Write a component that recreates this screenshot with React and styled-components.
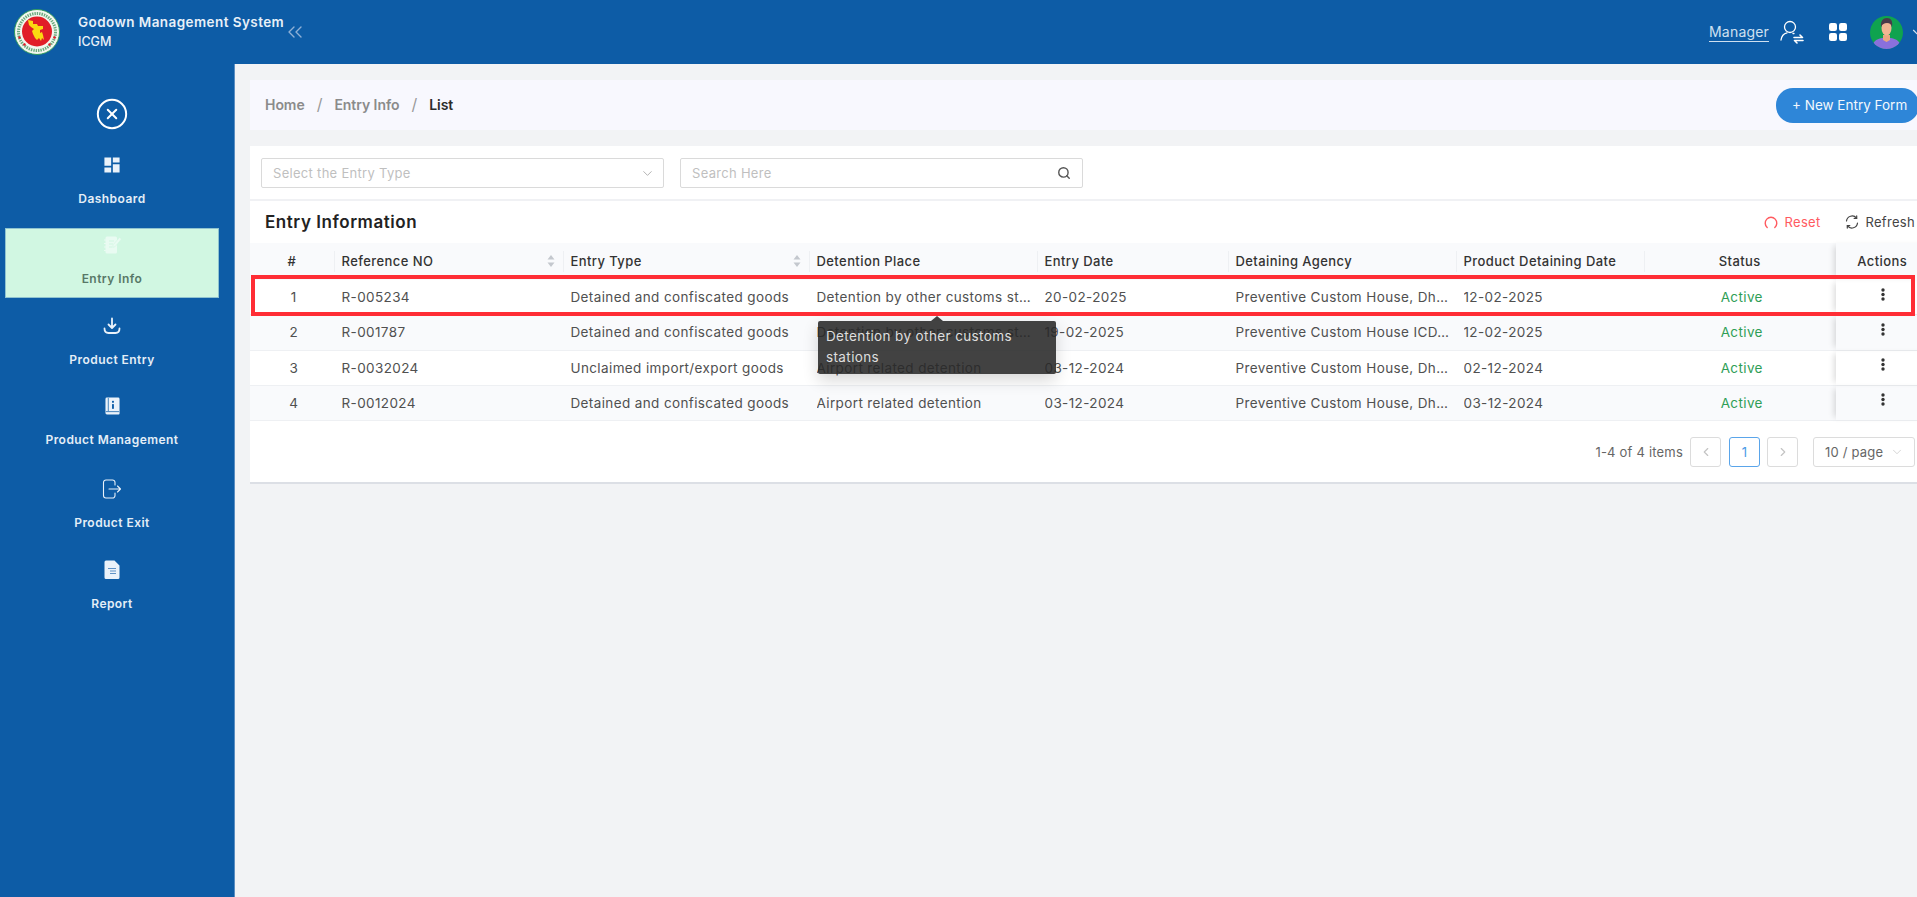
import React from "react";
import styled, { createGlobalStyle } from "styled-components";
import { ChevronDown, ChevronLeft, ChevronRight, ChevronsLeft, CircleX, Search } from "lucide-react";

const GlobalStyle = createGlobalStyle`
  html, body {
    margin: 0;
    padding: 0;
    height: 100%;
    overflow: hidden;
    background: #f2f3f5;
    font-family: Inter, "Liberation Sans", sans-serif;
  }
  * { box-sizing: border-box; }
`;

const Page = styled.div`
  width: 1917px;
  height: 897px;
  overflow: hidden;
  display: flex;
  flex-direction: column;
`;

const TopBar = styled.header`
  height: 64px;
  flex-shrink: 0;
  background: #0d5ca6;
  display: flex;
  align-items: center;
  padding-left: 14px;
`;

const Brand = styled.div`
  margin-left: 18px;
  display: flex;
  flex-direction: column;
  gap: 6px;
  color: #e8f0f8;
  font-size: 13.5px;
  line-height: 13px;
  font-weight: 600;
  letter-spacing: 0.43px;
  small {
    font-size: 12.5px;
    font-weight: 500;
    letter-spacing: 0;
  }
`;

const Collapse = styled.span`
  display: flex;
  margin-left: -1px;
  color: #8fb0d6;
`;

const TopRight = styled.div`
  margin-left: auto;
  display: flex;
  align-items: center;
  width: 208px;
  flex-shrink: 0;
`;

const RoleLink = styled.a`
  color: #cfe0f0;
  font-size: 14px;
  line-height: 17px;
  letter-spacing: 0.2px;
  padding-bottom: 1px;
  border-bottom: 1px solid #cfe0f0;
  margin-top: 1px;
`;

const IconSlot = styled.span`
  display: flex;
  margin-left: ${(p) => p.$left}px;
  color: #fff;
`;

const Body = styled.div`
  flex: 1;
  display: flex;
  min-height: 0;
`;

const Sidebar = styled.aside`
  width: 235px;
  flex-shrink: 0;
  background: #0d5ca6;
  border-right: 1px solid #5b8ec2;
  padding: 33px 15px 0 5px;
`;

const CloseButton = styled.div`
  display: flex;
  justify-content: center;
  color: #fff;
  height: 50.5px;
`;

const NavList = styled.nav`
  display: flex;
  flex-direction: column;
  gap: 10.5px;
  & > :nth-child(5) {
    margin-top: 2.5px;
  }
`;

const NavItem = styled.a`
  height: 70px;
  display: flex;
  flex-direction: column;
  align-items: center;
  padding-top: ${(p) => (p.$active ? "4px" : "5px")};
  color: ${(p) => (p.$active ? "#587867" : "#e4eef7")};
  background: ${(p) => (p.$active ? "#d1f7e2" : "transparent")};
  border: ${(p) => (p.$active ? "1px solid #8fc3d0" : "none")};
  font-size: 12px;
  font-weight: 600;
  letter-spacing: 0.45px;
`;

const NavIcon = styled.span`
  height: 24px;
  display: flex;
  align-items: center;
  justify-content: center;
  color: ${(p) => (p.$active ? "#e9fbf2" : "#eaf2fa")};
`;

const NavLabel = styled.span`
  margin-top: 14px;
  line-height: 16px;
`;

const Main = styled.main`
  flex: 1;
  min-width: 0;
  padding: 16px 0 0 15px;
`;

const Content = styled.div`
  width: 1679px;
  display: flex;
  flex-direction: column;
  gap: 16px;
`;

const BreadcrumbBar = styled.div`
  height: 50px;
  background: #f8f8fe;
  display: flex;
  align-items: center;
  padding-left: 15px;
  font-size: 14px;
  font-weight: 600;
  letter-spacing: -0.05px;
  color: #8b8b8b;
`;

const Crumb = styled.span`
  margin-top: -2px;
  color: ${(p) => (p.$current ? "#2b2b2b" : "#8b8b8b")};
`;

const CrumbSep = styled.span`
  margin: -2px 12px 0;
  font-weight: 400;
  font-size: 16px;
  color: #9a9a9a;
`;

const NewButton = styled.button`
  margin-left: auto;
  margin-right: 10px;
  width: 143px;
  height: 35px;
  border: none;
  border-radius: 17px;
  background: #2e86d8;
  color: #f2f8fd;
  font: inherit;
  font-size: 13.5px;
  font-weight: 400;
  text-align: left;
  padding-left: 16px;
`;

const Card = styled.section`
  background: #fff;
  border-bottom: 2px solid #dcdfe5;
  height: 337.5px;
  display: flex;
  flex-direction: column;
`;

const FilterRow = styled.div`
  height: 55px;
  flex-shrink: 0;
  border-bottom: 2px solid #f0f1f4;
  display: flex;
  gap: 16px;
  padding: 12px 0 0 11px;
`;

const Field = styled.div`
  width: ${(p) => p.$width}px;
  height: 30px;
  border: 1px solid #dadada;
  border-radius: 2px;
  display: flex;
  align-items: center;
  justify-content: space-between;
  padding: 0 ${(p) => p.$right}px 0 11px;
  color: #bfbfbf;
  font-size: 13px;
  letter-spacing: 0.3px;
  svg { color: #9a9a9a; }
`;

const TitleRow = styled.div`
  height: 42px;
  flex-shrink: 0;
  display: flex;
  align-items: center;
  padding-left: 15px;
`;

const Title = styled.h2`
  margin: 0;
  font-size: 17px;
  font-weight: 600;
  letter-spacing: 0.55px;
  color: #222;
`;

const TitleActions = styled.div`
  margin-left: auto;
  margin-right: 14px;
  display: flex;
  align-items: center;
  font-size: 13px;
  letter-spacing: 0.3px;
`;

const TitleAction = styled.span`
  display: flex;
  align-items: center;
  gap: 7px;
  margin-left: 24px;
  color: ${(p) => p.$color};
`;

const Table = styled.div`
  position: relative;
`;

const columns = "84px 229px 246px 228px 191px 228px 188px 192px 93px";

const HeadRow = styled.div`
  display: grid;
  grid-template-columns: ${columns};
  height: 37px;
  background: #f9fafc;
  color: #333;
  font-size: 13px;
  font-weight: 500;
  letter-spacing: 0.42px;
`;

const HeadCell = styled.div`
  position: relative;
  display: flex;
  align-items: center;
  justify-content: ${(p) => (p.$center ? "center" : "space-between")};
  padding: 0 8px 2px 7.5px;
  &::before {
    content: "";
    display: ${(p) => (p.$first ? "none" : "block")};
    position: absolute;
    left: 0;
    top: 8px;
    bottom: 8px;
    width: 1px;
    background: #eef0f3;
  }
`;

const Row = styled.div`
  display: grid;
  grid-template-columns: ${columns};
  height: 35.25px;
  background: ${(p) => (p.$striped ? "#f9fafc" : "#fff")};
  border-bottom: 1px solid #eef0f3;
  color: #505050;
  font-size: 13.5px;
  letter-spacing: 0.38px;
`;

const Cell = styled.div`
  display: flex;
  align-items: center;
  justify-content: ${(p) => (p.$center ? "center" : "flex-start")};
  padding: 0 4px 0 7.5px;
  min-width: 0;
  color: ${(p) => p.$color || "inherit"};
  span {
    overflow: hidden;
    white-space: nowrap;
    text-overflow: ellipsis;
  }
`;

const StickyHead = styled(HeadCell)`
  box-shadow: -5px 0 6px -3px rgba(0, 0, 0, 0.14);
  background: #f9fafc;
  &::before { display: none; }
`;

const StickyCell = styled(Cell)`
  box-shadow: -5px 0 6px -3px rgba(0, 0, 0, 0.14);
  color: #333;
  padding: 0 0 6px 0;
`;

const RedBox = styled.div`
  position: absolute;
  left: 1px;
  top: 32px;
  width: 1664px;
  height: 41px;
  border: 4px solid #ff2d35;
  pointer-events: none;
`;

const Tooltip = styled.div`
  position: absolute;
  left: 568px;
  top: 78px;
  width: 238px;
  height: 53px;
  padding: 5px 8px;
  background: rgba(40, 40, 40, 0.88);
  border-radius: 2px;
  box-shadow: 0 6px 16px rgba(0, 0, 0, 0.16);
  color: #dedede;
  font-size: 13.5px;
  letter-spacing: 0.38px;
  line-height: 21px;
  &::before {
    content: "";
    position: absolute;
    left: 113px;
    top: -5px;
    border-left: 6px solid transparent;
    border-right: 6px solid transparent;
    border-bottom: 5px solid rgba(40, 40, 40, 0.88);
  }
`;

const Pagination = styled.div`
  margin-top: 16px;
  padding-right: 14px;
  display: flex;
  align-items: center;
  justify-content: flex-end;
  color: #666;
  font-size: 13px;
  letter-spacing: 0.2px;
`;

const PageButton = styled.div`
  width: 31px;
  height: 30px;
  margin-left: ${(p) => p.$left}px;
  border: 1px solid ${(p) => (p.$active ? "#5aa5ea" : "#dcdcdc")};
  border-radius: 3px;
  display: flex;
  align-items: center;
  justify-content: center;
  color: ${(p) => (p.$active ? "#4a9ae6" : "#c4c4c4")};
`;

const PageSize = styled.div`
  width: 102px;
  height: 30px;
  margin-left: 15px;
  border: 1px solid #dcdcdc;
  border-radius: 3px;
  display: flex;
  align-items: center;
  justify-content: space-between;
  padding: 0 10px 0 11px;
  color: #666;
  svg { color: #c4c4c4; }
`;

const Logo = () => (
  <svg width="46" height="46" viewBox="0 0 46 46">
    <circle cx="23" cy="23" r="22.5" fill="#f3f7ee" stroke="#2f9a5c" />
    <circle cx="23" cy="23" r="18.5" fill="none" stroke="#6aa97d" strokeWidth="3" strokeDasharray="1.4 1" />
    <circle cx="23" cy="22.5" r="15" fill="#e11d27" />
    <path d="M14 11 L19 12 L19 15 L23 15 L24 17 L29 17 L29 20 L26 21 L26 24 L28 23 L29 26 L30 31 L28 29 L27 32 L25 29 L23 31 L21 29 L19 25 L18 22 L20 20 L17 18 L15 16 Z" fill="#fbd911" />
    <path d="M4 28l2-1 1 2-2 1zM39 28l2-1 1 2-2 1zM9 35l2-1 1 2-2 1zM34 35l2-1 1 2-2 1z" fill="#e11d27" />
  </svg>
);

const DashboardIcon = () => (
  <svg width="16" height="16" viewBox="2.500 2.500 19 19" fill="currentColor">
    <path d="M3 13h8V3H3v10zm0 8h8v-6H3v6zm10 0h8V11h-8v10zm0-18v6h8V3h-8z" />
  </svg>
);

const EntryIcon = () => (
  <svg width="19" height="18" viewBox="0 0 19 18">
    <path d="M4 .5h8.500A1.500 1.500 0 0 1 14 2v14a1.500 1.500 0 0 1-1.500 1.500H4A1.500 1.500 0 0 1 2.500 16V2A1.500 1.500 0 0 1 4 .5z" fill="currentColor" />
    <path d="M1 4h3M1 7.500h3M1 11h3M1 14.500h3" stroke="currentColor" strokeWidth="1.200" />
    <path d="M6 5h5M6 8h4M6 11h3" stroke="#d1f7e2" strokeWidth="1" />
    <path d="M16.500 1.500l2 1.500-6.300 7.600-2.500.8.400-2.600z" fill="currentColor" stroke="#d1f7e2" strokeWidth=".6" />
  </svg>
);

const TrayIcon = () => (
  <svg width="18" height="18" viewBox="0 0 18 18" fill="none" stroke="currentColor" strokeWidth="1.800" strokeLinecap="round" strokeLinejoin="round">
    <path d="M9 1.500v9M5.500 7.500 9 11l3.500-3.500" />
    <path d="M1.500 11.500c0 3 1.500 4.500 4 4.500h7c2.500 0 4-1.500 4-4.500" />
  </svg>
);

const BookIcon = () => (
  <svg width="15" height="18" viewBox="0 0 16 19">
    <path d="M2 0.500h12a1.500 1.500 0 0 1 1.500 1.500v15.500a1 1 0 0 1-1 1H2a1.500 1.500 0 0 1-1.500-1.500V2A1.500 1.500 0 0 1 2 .5z" fill="currentColor" />
    <path d="M3.500 1v14" stroke="#0d5ca6" strokeWidth=".8" />
    <path d="M1 15.500h14" stroke="#0d5ca6" strokeWidth=".8" />
    <rect x="7.500" y="4" width="2" height="2" fill="#0d5ca6" />
    <rect x="7.500" y="7.500" width="2" height="5" fill="#0d5ca6" />
  </svg>
);

const ExitIcon = () => (
  <svg width="20" height="20" viewBox="0 0 20 20" fill="none" stroke="currentColor" strokeWidth="1.100" strokeLinecap="round" strokeLinejoin="round">
    <path d="M13 6V3.500A2.500 2.500 0 0 0 10.500 1H4A2.500 2.500 0 0 0 1.500 3.500v13A2.500 2.500 0 0 0 4 19h6.500a2.500 2.500 0 0 0 2.500-2.500V14" />
    <path d="M7 10h11.500M15.500 7l3 3-3 3" />
  </svg>
);

const ReportIcon = () => (
  <svg width="16" height="19" viewBox="0 0 16 19">
    <path d="M2 0.500h8.500L15.500 5.500v12a1.500 1.500 0 0 1-1.500 1.500H2A1.500 1.500 0 0 1 .5 17.500V2A1.500 1.500 0 0 1 2 .5z" fill="currentColor" />
    <path d="M4 8.500h8M6 11h6M6 13.500h6" stroke="#5f92c6" strokeWidth="1.100" />
  </svg>
);

const ManagerIcon = () => (
  <svg width="24" height="24" viewBox="0 0 24 24" fill="none" stroke="currentColor" strokeWidth="1.300" strokeLinecap="round" strokeLinejoin="round">
    <circle cx="10" cy="7" r="5.500" />
    <path d="M1 20c.6-4.500 3-6.500 6-7.200M13 13.500h1" />
    <path d="M14 17.500h8.500l-2.500-2.500M23 20.500h-8.500l2.500 2.500" strokeWidth="1.600" />
  </svg>
);

const AppsIcon = () => (
  <svg width="18" height="18" viewBox="0 0 18 18" fill="currentColor">
    <rect x="0" y="0" width="8" height="8" rx="2.200" />
    <rect x="10" y="0" width="8" height="8" rx="2.200" />
    <rect x="0" y="10" width="8" height="8" rx="2.200" />
    <rect x="10" y="10" width="8" height="8" rx="2.200" />
  </svg>
);

const Avatar = () => (
  <svg width="33" height="33" viewBox="0 0 33 33">
    <defs>
      <clipPath id="avatar-clip">
        <circle cx="16.500" cy="16.500" r="16.500" />
      </clipPath>
    </defs>
    <g clipPath="url(#avatar-clip)">
      <rect width="33" height="33" fill="#0fa34f" />
      <path d="M2 33c0-7 4-10 10-11h9c6 1 10 4 10 11z" fill="#8a70dc" />
      <path d="M13 19h7v5l-3.500 2-3.500-2z" fill="#eaa782" />
      <ellipse cx="16.500" cy="12" rx="5" ry="7.500" fill="#f2b592" />
      <path d="M11 11c-.5-6 2-9 6-9s6 3 5 9c-1-3-2-4-5-4s-4.500 1-6 4z" fill="#4a3a4a" />
    </g>
  </svg>
);

const SortCarets = () => (
  <svg width="8" height="14" viewBox="0 0 8 14" fill="#c4c8ce">
    <path d="M4 1l3.500 4.500h-7zM4 13L.5 8.500h7z" />
  </svg>
);

const ResetIcon = () => (
  <svg width="14" height="14" viewBox="0 0 14 14" fill="none" stroke="currentColor" strokeWidth="1.400" strokeLinecap="round">
    <path d="M3.200 12.500A5.800 5.800 0 1 1 10.800 12.500" />
  </svg>
);

const RefreshIcon = () => (
  <svg width="14" height="14" viewBox="0 0 14 14" fill="none" stroke="#444" strokeWidth="1.200" strokeLinecap="round">
    <path d="M1.500 6A5.600 5.600 0 0 1 11.500 3.200" />
    <path d="M12.500 8A5.600 5.600 0 0 1 2.500 10.800" />
    <path d="M11.700.9v2.500H9.200M2.300 13.100v-2.500h2.500" />
  </svg>
);

const MoreIcon = () => (
  <svg width="4" height="13" viewBox="0 0 4 13" fill="currentColor">
    <circle cx="2" cy="2" r="1.700" />
    <circle cx="2" cy="6.500" r="1.700" />
    <circle cx="2" cy="11" r="1.700" />
  </svg>
);

const navItems = [
  { label: "Dashboard", icon: <DashboardIcon /> },
  { label: "Entry Info", icon: <EntryIcon />, active: true },
  { label: "Product Entry", icon: <TrayIcon /> },
  { label: "Product Management", icon: <BookIcon /> },
  { label: "Product Exit", icon: <ExitIcon /> },
  { label: "Report", icon: <ReportIcon /> },
];

const rows = [
  ["R-005234", "Detained and confiscated goods", "Detention by other customs stations", "20-02-2025", "Preventive Custom House, Dhaka Bangladesh", "12-02-2025"],
  ["R-001787", "Detained and confiscated goods", "Detention by other customs stations", "19-02-2025", "Preventive Custom House ICD, Kamalapur Dhaka", "12-02-2025"],
  ["R-0032024", "Unclaimed import/export goods", "Airport related detention", "03-12-2024", "Preventive Custom House, Dhaka Bangladesh", "02-12-2024"],
  ["R-0012024", "Detained and confiscated goods", "Airport related detention", "03-12-2024", "Preventive Custom House, Dhaka Bangladesh", "03-12-2024"],
];

const App = () => {
  return (
    <Page>
      <GlobalStyle />
      <TopBar>
        <Logo />
        <Brand>
          <span>Godown Management System</span>
          <small>ICGM</small>
        </Brand>
        <Collapse>
          <ChevronsLeft size={24} strokeWidth={1.4} />
        </Collapse>
        <TopRight>
          <RoleLink>Manager</RoleLink>
          <IconSlot $left={11}><ManagerIcon /></IconSlot>
          <IconSlot $left={25}><AppsIcon /></IconSlot>
          <IconSlot $left={23}><Avatar /></IconSlot>
          <IconSlot $left={7}><ChevronDown size={14} color="#cfe0f0" /></IconSlot>
        </TopRight>
      </TopBar>
      <Body>
        <Sidebar>
          <CloseButton>
            <CircleX size={34} strokeWidth={1.4} />
          </CloseButton>
          <NavList>
            {navItems.map((item) => (
              <NavItem key={item.label} $active={item.active}>
                <NavIcon $active={item.active}>{item.icon}</NavIcon>
                <NavLabel>{item.label}</NavLabel>
              </NavItem>
            ))}
          </NavList>
        </Sidebar>
        <Main>
          <Content>
            <BreadcrumbBar>
              <Crumb>Home</Crumb>
              <CrumbSep>/</CrumbSep>
              <Crumb>Entry Info</Crumb>
              <CrumbSep>/</CrumbSep>
              <Crumb $current>List</Crumb>
              <NewButton>+ New Entry Form</NewButton>
            </BreadcrumbBar>
            <Card>
              <FilterRow>
                <Field $width={403} $right={8}>
                  Select the Entry Type
                  <ChevronDown size={15} strokeWidth={1.2} />
                </Field>
                <Field $width={403} $right={11}>
                  Search Here
                  <Search size={14} strokeWidth={2.4} color="#555" />
                </Field>
              </FilterRow>
              <TitleRow>
                <Title>Entry Information</Title>
                <TitleActions>
                  <TitleAction $color="#ff5a5f"><ResetIcon />Reset</TitleAction>
                  <TitleAction $color="#444"><RefreshIcon />Refresh</TitleAction>
                </TitleActions>
              </TitleRow>
              <Table>
                <HeadRow>
                  <HeadCell $center $first>#</HeadCell>
                  <HeadCell>Reference NO<SortCarets /></HeadCell>
                  <HeadCell>Entry Type<SortCarets /></HeadCell>
                  <HeadCell>Detention Place</HeadCell>
                  <HeadCell>Entry Date</HeadCell>
                  <HeadCell>Detaining Agency</HeadCell>
                  <HeadCell>Product Detaining Date</HeadCell>
                  <HeadCell $center>Status</HeadCell>
                  <StickyHead $center>Actions</StickyHead>
                </HeadRow>
                {rows.map((row, i) => (
                  <Row key={row[0]} $striped={i % 2 === 1}>
                    <Cell $center>{i + 1}</Cell>
                    {row.map((value, j) => (
                      <Cell key={j}><span>{value}</span></Cell>
                    ))}
                    <Cell $center $color="#2f9e57">Active</Cell>
                    <StickyCell $center><MoreIcon /></StickyCell>
                  </Row>
                ))}
                <RedBox />
                <Tooltip>Detention by other customs stations</Tooltip>
              </Table>
              <Pagination>
                1-4 of 4 items
                <PageButton $left={7}><ChevronLeft size={14} /></PageButton>
                <PageButton $left={8} $active>1</PageButton>
                <PageButton $left={7}><ChevronRight size={14} /></PageButton>
                <PageSize>10 / page<ChevronDown size={14} strokeWidth={1.2} /></PageSize>
              </Pagination>
            </Card>
          </Content>
        </Main>
      </Body>
    </Page>
  );
};

export default App;
